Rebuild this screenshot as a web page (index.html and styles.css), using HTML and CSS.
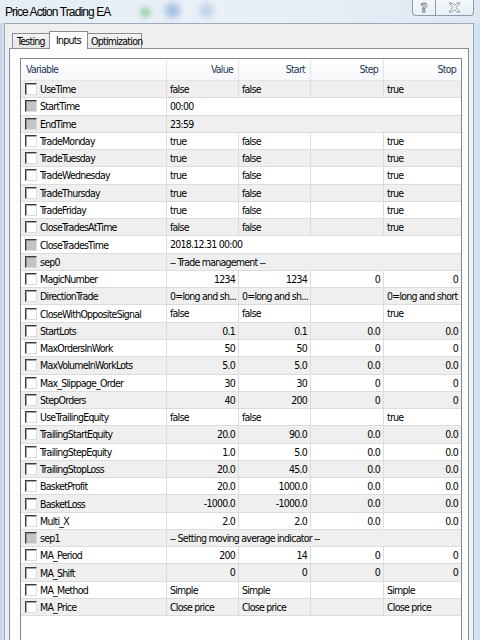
FILE: index.html
```html
<!DOCTYPE html>
<html>
<head>
<meta charset="utf-8">
<link rel="stylesheet" href="styles.css">
</head>
<body>
<div class="titlebar">
  <span class="title">Price Action Trading EA</span>
  <span class="glow g1"></span><span class="glow g2"></span><span class="glow g3"></span>
  <div class="caption-btns">
    <div class="cbtn help">?</div>
    <div class="cbtn close"><svg width="13" height="11" viewBox="0 0 13 11"><path d="M1 1h3l2.5 2.6L9 1h3L8 5.5 12 10H9L6.5 7.4 4 10H1l4-4.5z" fill="#fff" stroke="#8a94a2" stroke-width="1"/></svg></div>
  </div>
</div>
<div class="frame">
  <div class="window">
    <div class="tabs">
      <div class="tab">Testing</div>
      <div class="tab active">Inputs</div>
      <div class="tab">Optimization</div>
    </div>
    <div class="panel">
      <div class="list">
        <div class="row head">
          <div class="c name">Variable</div><div class="c r">Value</div><div class="c r">Start</div><div class="c r">Step</div><div class="c r">Stop</div>
        </div>
        <div class="row"><div class="c name"><span class="cb"></span>UseTime</div><div class="c">false</div><div class="c">false</div><div class="c"></div><div class="c">true</div></div>
        <div class="row"><div class="c name"><span class="cb dis"></span>StartTime</div><div class="c span">00:00</div></div>
        <div class="row"><div class="c name"><span class="cb dis"></span>EndTime</div><div class="c span">23:59</div></div>
        <div class="row"><div class="c name"><span class="cb"></span>TradeMonday</div><div class="c">true</div><div class="c">false</div><div class="c"></div><div class="c">true</div></div>
        <div class="row"><div class="c name"><span class="cb"></span>TradeTuesday</div><div class="c">true</div><div class="c">false</div><div class="c"></div><div class="c">true</div></div>
        <div class="row"><div class="c name"><span class="cb"></span>TradeWednesday</div><div class="c">true</div><div class="c">false</div><div class="c"></div><div class="c">true</div></div>
        <div class="row"><div class="c name"><span class="cb"></span>TradeThursday</div><div class="c">true</div><div class="c">false</div><div class="c"></div><div class="c">true</div></div>
        <div class="row"><div class="c name"><span class="cb"></span>TradeFriday</div><div class="c">true</div><div class="c">false</div><div class="c"></div><div class="c">true</div></div>
        <div class="row"><div class="c name"><span class="cb"></span>CloseTradesAtTime</div><div class="c">false</div><div class="c">false</div><div class="c"></div><div class="c">true</div></div>
        <div class="row"><div class="c name"><span class="cb dis"></span>CloseTradesTime</div><div class="c span">2018.12.31 00:00</div></div>
        <div class="row"><div class="c name"><span class="cb dis"></span>sep0</div><div class="c span">-- Trade management --</div></div>
        <div class="row"><div class="c name"><span class="cb"></span>MagicNumber</div><div class="c r">1234</div><div class="c r">1234</div><div class="c r">0</div><div class="c r">0</div></div>
        <div class="row"><div class="c name"><span class="cb"></span>DirectionTrade</div><div class="c">0=long and sh...</div><div class="c">0=long and sh...</div><div class="c"></div><div class="c">0=long and short</div></div>
        <div class="row"><div class="c name"><span class="cb"></span>CloseWithOppositeSignal</div><div class="c">false</div><div class="c">false</div><div class="c"></div><div class="c">true</div></div>
        <div class="row"><div class="c name"><span class="cb"></span>StartLots</div><div class="c r">0.1</div><div class="c r">0.1</div><div class="c r">0.0</div><div class="c r">0.0</div></div>
        <div class="row"><div class="c name"><span class="cb"></span>MaxOrdersInWork</div><div class="c r">50</div><div class="c r">50</div><div class="c r">0</div><div class="c r">0</div></div>
        <div class="row"><div class="c name"><span class="cb"></span>MaxVolumeInWorkLots</div><div class="c r">5.0</div><div class="c r">5.0</div><div class="c r">0.0</div><div class="c r">0.0</div></div>
        <div class="row"><div class="c name"><span class="cb"></span>Max_Slippage_Order</div><div class="c r">30</div><div class="c r">30</div><div class="c r">0</div><div class="c r">0</div></div>
        <div class="row"><div class="c name"><span class="cb"></span>StepOrders</div><div class="c r">40</div><div class="c r">200</div><div class="c r">0</div><div class="c r">0</div></div>
        <div class="row"><div class="c name"><span class="cb"></span>UseTrailingEquity</div><div class="c">false</div><div class="c">false</div><div class="c"></div><div class="c">true</div></div>
        <div class="row"><div class="c name"><span class="cb"></span>TrailingStartEquity</div><div class="c r">20.0</div><div class="c r">90.0</div><div class="c r">0.0</div><div class="c r">0.0</div></div>
        <div class="row"><div class="c name"><span class="cb"></span>TrailingStepEquity</div><div class="c r">1.0</div><div class="c r">5.0</div><div class="c r">0.0</div><div class="c r">0.0</div></div>
        <div class="row"><div class="c name"><span class="cb"></span>TrailingStopLoss</div><div class="c r">20.0</div><div class="c r">45.0</div><div class="c r">0.0</div><div class="c r">0.0</div></div>
        <div class="row"><div class="c name"><span class="cb"></span>BasketProfit</div><div class="c r">20.0</div><div class="c r">1000.0</div><div class="c r">0.0</div><div class="c r">0.0</div></div>
        <div class="row"><div class="c name"><span class="cb"></span>BasketLoss</div><div class="c r">-1000.0</div><div class="c r">-1000.0</div><div class="c r">0.0</div><div class="c r">0.0</div></div>
        <div class="row"><div class="c name"><span class="cb"></span>Multi_X</div><div class="c r">2.0</div><div class="c r">2.0</div><div class="c r">0.0</div><div class="c r">0.0</div></div>
        <div class="row"><div class="c name"><span class="cb dis"></span>sep1</div><div class="c span">-- Setting moving average indicator --</div></div>
        <div class="row"><div class="c name"><span class="cb"></span>MA_Period</div><div class="c r">200</div><div class="c r">14</div><div class="c r">0</div><div class="c r">0</div></div>
        <div class="row"><div class="c name"><span class="cb"></span>MA_Shift</div><div class="c r">0</div><div class="c r">0</div><div class="c r">0</div><div class="c r">0</div></div>
        <div class="row"><div class="c name"><span class="cb"></span>MA_Method</div><div class="c">Simple</div><div class="c">Simple</div><div class="c"></div><div class="c">Simple</div></div>
        <div class="row"><div class="c name"><span class="cb"></span>MA_Price</div><div class="c">Close price</div><div class="c">Close price</div><div class="c"></div><div class="c">Close price</div></div>
      </div>
    </div>
  </div>
</div>
</body>
</html>
```
FILE: styles.css
```css
* { box-sizing: border-box; }
html, body { margin: 0; padding: 0; }
body {
  width: 480px;
  height: 640px;
  overflow: hidden;
  background: linear-gradient(to right, #c3d3e6 0px, #d7e3f0 4px, #dfe8f2 40%, #d3e0ee 100%);
  font-family: "DejaVu Sans Condensed", "Liberation Sans", sans-serif;
  font-size: 10.5px;
  letter-spacing: -0.75px;
  color: #000;
}
.titlebar {
  position: relative;
  height: 23px;
  display: flex;
  align-items: flex-start;
  background: linear-gradient(to right, #e6edf5, #eaf0f7 45%, #dfe8f2);
}
.title {
  font-family: "Liberation Sans", sans-serif;
  font-size: 12px;
  letter-spacing: -0.9px;
  padding: 5px 0 0 5px;
  color: #000;
}
.glow {
  position: absolute;
  border-radius: 50%;
  filter: blur(3px);
  opacity: 0.8;
}
.g1 { left: 141px; top: 8px; width: 9px; height: 9px; background: #5fbf6a; }
.g2 { left: 165px; top: 3px; width: 15px; height: 15px; background: #8fb3df; }
.g3 { left: 199px; top: 3px; width: 15px; height: 15px; background: #b7cde8; }
.caption-btns {
  margin-left: auto;
  margin-right: 6px;
  display: flex;
  height: 16px;
}
.cbtn {
  height: 16px;
  border: 1px solid #8f9cad;
  border-top: none;
  background: linear-gradient(#f5f8fb, #e9eff6);
  display: flex;
  align-items: center;
  justify-content: center;
}
.help {
  width: 23px;
  border-radius: 0 0 0 4px;
  font-family: "DejaVu Sans", sans-serif;
  font-size: 12px;
  letter-spacing: 0;
  font-weight: bold;
  color: #fff;
  -webkit-text-stroke: 0.8px #6d7786;
  border-right: none;
}
.close {
  width: 39px;
  border-radius: 0 0 4px 0;
}
.frame {
  padding: 0 6px 0 4px;
}
.window {
  height: 617px;
  background: #f0f0f0;
  border: 1px solid #9aa9bc;
  border-bottom: none;
  padding: 7px 4px 0 4px;
}
.tabs {
  display: flex;
  align-items: flex-end;
  height: 17px;
  padding-left: 3px;
  position: relative;
  z-index: 2;
}
.tab {
  height: 15px;
  padding: 0 4px;
  line-height: 15px;
  border: 1px solid #898c95;
  border-bottom: none;
  background: linear-gradient(#f3f3f3, #e5e5e5);
  margin-right: -1px;
  color: #000;
}
.tab:first-child { width: 38px; }
.tab.active {
  height: 18px;
  width: 39px;
  line-height: 16px;
  padding-left: 6px;
  background: #fff;
  margin-bottom: -1px;
}
.tab:last-child { width: 55px; padding-left: 3px; }
.panel {
  height: 620px;
  background: #fcfcfc;
  border: 1px solid #898c95;
  padding: 9px 6px 0 10px;
}
.list {
  height: 600px;
  background: #fff;
  border: 1px solid #828790;
  border-bottom: none;
}
.row {
  display: grid;
  grid-template-columns: 146px 72px 72px 73px 77px;
  height: 17.27px;
  border-bottom: 1px solid #dcdcdc;
  background: #fff;
}
.row:nth-child(even) { background: #efefef; }
.row.head {
  height: 22px;
  background: linear-gradient(#ffffff, #f6f7f9);
  border-bottom: 1px solid #e3e5e8;
  color: #1e395b;
}
.row.head .c { line-height: 21px; padding-right: 5px; border-right-color: #e3e5e8; }
.row.head .name { padding-left: 5px; }
.c {
  border-right: 1px solid #dcdcdc;
  line-height: 16px;
  padding: 0 3px;
  white-space: nowrap;
  overflow: hidden;
}
.c:last-child { border-right: none; }
.c.r { text-align: right; }
.c.span { grid-column: span 4; }
.name {
  display: flex;
  align-items: center;
  padding-left: 4px;
}
.cb {
  width: 12px;
  height: 12px;
  margin-right: 3px;
  flex: none;
  background: #fff;
  border: 1px solid;
  border-color: #3c3c3c #dcdcdc #dcdcdc #3c3c3c;
  box-shadow: inset 1px 1px 0 #a3a3a3;
}
.cb.dis { background: #c4c4c4; box-shadow: inset 1px 1px 0 #909090; }
```
